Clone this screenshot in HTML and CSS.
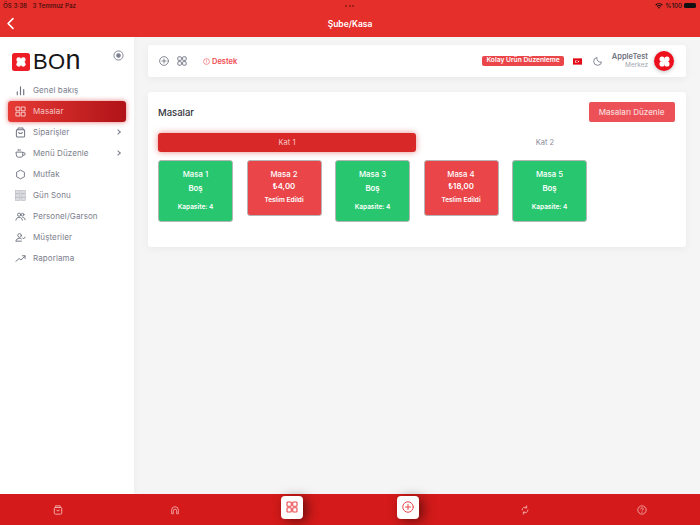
FILE: index.html
```html
<!DOCTYPE html>
<html lang="tr">
<head>
<meta charset="utf-8">
<title>Şube/Kasa</title>
<link rel="stylesheet" href="styles.css">
</head>
<body>
<svg class="defs" width="0" height="0" aria-hidden="true">
  <defs>
    <symbol id="clover" viewBox="0 0 24 24"><g fill="#fff"><circle cx="7.500" cy="7.500" r="4.800"/><circle cx="16.500" cy="7.500" r="4.800"/><circle cx="7.500" cy="16.500" r="4.800"/><circle cx="16.500" cy="16.500" r="4.800"/><path d="M8 8h8v8H8z"/></g></symbol>
    <symbol id="grid" viewBox="0 0 24 24"><g fill="none" stroke="currentColor" stroke-width="2.200"><rect x="2" y="2" width="8.500" height="8.500" rx="1.500"/><rect x="13.500" y="2" width="8.500" height="8.500" rx="1.500"/><rect x="2" y="13.500" width="8.500" height="8.500" rx="1.500"/><rect x="13.500" y="13.500" width="8.500" height="8.500" rx="1.500"/></g></symbol>
    <symbol id="plus" viewBox="0 0 24 24"><g fill="none" stroke="currentColor" stroke-width="2" stroke-linecap="round"><circle cx="12" cy="12" r="10.500"/><path d="M12 7v10M7 12h10"/></g></symbol>
    <symbol id="bag" viewBox="0 0 24 24"><g fill="none" stroke="currentColor" stroke-width="2.200" stroke-linecap="round" stroke-linejoin="round"><path d="M7 2h10l1 4h1a2 2 0 0 1 2 2v11a3 3 0 0 1-3 3H6a3 3 0 0 1-3-3V8a2 2 0 0 1 2-2h1z"/><path d="M6 6h12M8 12c1 3 7 3 8 0"/></g></symbol>
  </defs>
</svg>

<header class="topbar">
  <div class="status">
    <span class="status-left"><span>ÖS 3:38</span><span>3 Temmuz Paz</span></span>
    <span class="status-dots"><i></i><i></i><i></i></span>
    <span class="status-right">
      <svg class="wifi" viewBox="0 0 16 12"><path d="M8 11.500 5.800 9a3.200 3.200 0 0 1 4.400 0zM4.500 7.700 3 6.100a7.400 7.400 0 0 1 10 0l-1.500 1.600a5.200 5.200 0 0 0-7 0zM1.900 5 .4 3.400a11.200 11.200 0 0 1 15.200 0L14.100 5a9 9 0 0 0-12.200 0z" fill="#111"/></svg>
      <span>%100</span><span class="battery"></span>
    </span>
  </div>
  <div class="titlebar">
    <svg class="back" viewBox="0 0 10 16"><path d="M8 2 2 8l6 6" fill="none" stroke="#fff" stroke-width="2" stroke-linecap="round" stroke-linejoin="round"/></svg>
    <span class="title">Şube/Kasa</span>
  </div>
</header>

<div class="body-row">
  <aside class="sidebar">
    <div class="brand">
      <span class="logo-mark"><svg viewBox="0 0 24 24"><use href="#clover"/></svg></span>
      <span class="logo-text">BO<span class="logo-n">n</span></span>
      <svg class="pin" viewBox="0 0 12 12"><circle cx="6" cy="6" r="5" fill="none" stroke="#7c7f8e" stroke-width="1"/><circle cx="6" cy="6" r="2.500" fill="#7c7f8e"/></svg>
    </div>
    <nav class="menu">
      <a class="item"><svg viewBox="0 0 24 24"><path d="M5 21v-6M12 21V4M19 21v-11" fill="none" stroke="currentColor" stroke-width="2.500" stroke-linecap="round"/></svg><span>Genel bakış</span></a>
      <a class="item active"><svg viewBox="0 0 24 24"><use href="#grid"/></svg><span>Masalar</span></a>
      <a class="item"><svg viewBox="0 0 24 24"><use href="#bag"/></svg><span>Siparişler</span><b class="chev"></b></a>
      <a class="item"><svg viewBox="0 0 24 24"><path d="M3 9h14v7a4 4 0 0 1-4 4H7a4 4 0 0 1-4-4zM17 10h2a2.500 2.500 0 0 1 0 6h-2M7 3v3M11 3v3" fill="none" stroke="currentColor" stroke-width="2" stroke-linecap="round" stroke-linejoin="round"/></svg><span>Menü Düzenle</span><b class="chev"></b></a>
      <a class="item"><svg viewBox="0 0 24 24"><path d="M12 2.500 20.500 7v10L12 21.500 3.500 17V7z" fill="none" stroke="currentColor" stroke-width="2" stroke-linejoin="round"/></svg><span>Mutfak</span></a>
      <a class="item"><svg viewBox="0 0 24 24"><g fill="#dcdde2" stroke="#a6a8b4" stroke-width="1"><rect x="1" y="1" width="10" height="7"/><rect x="13" y="1" width="10" height="7"/><rect x="1" y="8.500" width="10" height="7"/><rect x="13" y="8.500" width="10" height="7"/><rect x="1" y="16" width="10" height="7"/><rect x="13" y="16" width="10" height="7"/></g></svg><span>Gün Sonu</span></a>
      <a class="item"><svg viewBox="0 0 24 24"><g fill="none" stroke="currentColor" stroke-width="2" stroke-linecap="round"><circle cx="9" cy="8" r="3.500"/><circle cx="16.500" cy="8" r="3"/><path d="M2 20c0-4 3-6 7-6s7 2 7 6M17 14c3 0 5 2 5 5"/></g></svg><span>Personel/Garson</span></a>
      <a class="item"><svg viewBox="0 0 24 24"><g fill="none" stroke="currentColor" stroke-width="2" stroke-linecap="round" stroke-linejoin="round"><circle cx="10" cy="7.500" r="4"/><path d="M2 20c0-4 3-6 8-6 2 0 3 .3 4 1M3 20h11M17 13l2 2 3-4"/></g></svg><span>Müşteriler</span></a>
      <a class="item"><svg viewBox="0 0 24 24"><path d="M2 18l7-6 4 3 9-8M16 6h6v6" fill="none" stroke="currentColor" stroke-width="2" stroke-linecap="round" stroke-linejoin="round"/></svg><span>Raporlama</span></a>
    </nav>
  </aside>

  <main class="content">
    <section class="card toolbar">
      <svg class="tool-icon" viewBox="0 0 24 24"><use href="#plus"/></svg>
      <svg class="tool-icon" viewBox="0 0 24 24"><use href="#grid"/></svg>
      <a class="support"><svg viewBox="0 0 12 12"><circle cx="6" cy="6" r="5" fill="none" stroke="currentColor"/><path d="M6 3.200v3.300M6 8v.8" stroke="currentColor"/></svg>Destek</a>
      <span class="spacer"></span>
      <span class="badge">Kolay Ürün Düzenleme</span>
      <svg class="flag" viewBox="0 0 10 7"><rect width="10" height="7" fill="#e30a17"/><circle cx="4" cy="3.500" r="1.700" fill="#fff"/><circle cx="4.500" cy="3.500" r="1.350" fill="#e30a17"/><circle cx="6.200" cy="3.500" r=".7" fill="#fff"/></svg>
      <svg class="moon" viewBox="0 0 24 24"><path d="M20.500 14.500A9 9 0 0 1 9.500 3.500 9.500 9.500 0 1 0 20.500 14.500z" fill="none" stroke="#6f7280" stroke-width="2" stroke-linejoin="round"/></svg>
      <div class="user"><strong>AppleTest</strong><small>Merkez</small></div>
      <span class="avatar"><svg viewBox="0 0 24 24"><use href="#clover"/></svg></span>
    </section>

    <section class="card panel">
      <div class="panel-head">
        <h1>Masalar</h1>
        <button class="edit-btn" type="button">Masaları Düzenle</button>
      </div>
      <div class="tabs">
        <button class="tab on" type="button">Kat 1</button>
        <button class="tab" type="button">Kat 2</button>
      </div>
      <div class="tables">
        <article class="table free"><h2>Masa 1</h2><p class="state">Boş</p><p class="cap">Kapasite: 4</p></article>
        <article class="table busy"><h2>Masa 2</h2><p class="state">₺4,00</p><p class="note">Teslim Edildi</p></article>
        <article class="table free"><h2>Masa 3</h2><p class="state">Boş</p><p class="cap">Kapasite: 4</p></article>
        <article class="table busy"><h2>Masa 4</h2><p class="state">₺18,00</p><p class="note">Teslim Edildi</p></article>
        <article class="table free"><h2>Masa 5</h2><p class="state">Boş</p><p class="cap">Kapasite: 4</p></article>
      </div>
    </section>
  </main>
</div>

<footer class="dock">
  <span class="dock-cell"><svg viewBox="0 0 24 24"><use href="#bag"/></svg></span>
  <span class="dock-cell"><svg viewBox="0 0 24 24"><path d="M4 21v-9a8 8 0 0 1 16 0v9h-4v-7a4 4 0 0 0-8 0v7z" fill="none" stroke="currentColor" stroke-width="2" stroke-linejoin="round"/></svg></span>
  <span class="dock-cell"><span class="dock-btn"><svg viewBox="0 0 24 24"><use href="#grid"/></svg></span></span>
  <span class="dock-cell"><span class="dock-btn"><svg viewBox="0 0 24 24"><use href="#plus"/></svg></span></span>
  <span class="dock-cell"><svg viewBox="0 0 24 24"><path d="M5 12a7 7 0 0 1 11-5.700M19 12a7 7 0 0 1-11 5.700M16 2v5h-4M8 22v-5h4" fill="none" stroke="currentColor" stroke-width="2" stroke-linecap="round" stroke-linejoin="round"/></svg></span>
  <span class="dock-cell"><svg viewBox="0 0 24 24"><circle cx="12" cy="12" r="10" fill="none" stroke="currentColor" stroke-width="2"/><path d="M9 9.500a3 3 0 1 1 4.500 2.600c-1 .6-1.500 1.200-1.500 2.400M12 17.500v.5" fill="none" stroke="currentColor" stroke-width="2" stroke-linecap="round"/></svg></span>
</footer>
</body>
</html>
```

FILE: styles.css
```css
* { box-sizing: border-box; }
html, body { margin: 0; height: 100%; }
body {
  width: 700px;
  height: 525px;
  display: flex;
  flex-direction: column;
  overflow: hidden;
  background: #f5f5f5;
  font-family: Inter, "Noto Sans", sans-serif;
  color: #6f7280;
}
.defs { position: absolute; }

.topbar { height: 36.500px; background: #e52f2a; flex: none; }
.status {
  height: 11px;
  display: flex;
  justify-content: space-between;
  align-items: center;
  padding: 0 4px 0 3px;
  position: relative;
  font-size: 6.200px;
  font-weight: 500;
  color: #3a0d0b;
}
.status-left { display: flex; gap: 5.500px; }
.status-dots { display: flex; gap: 1.500px; position: absolute; left: 345px; top: 5px; }
.status-dots i { width: 2px; height: 2px; border-radius: 50%; background: #8a1a16; }
.status-right { display: flex; align-items: center; gap: 2px; color: #111; }
.wifi { width: 8px; height: 6px; }
.battery { width: 12px; height: 5.500px; border-radius: 1.500px; background: #111; }
.titlebar { height: 25.500px; display: flex; align-items: center; justify-content: center; position: relative; }
.back { position: absolute; left: 6px; top: 6px; width: 9px; height: 13px; }
.title { color: #fff; font-size: 8.500px; font-weight: 600; }

.body-row { flex: 1; display: flex; min-height: 0; }
.sidebar { width: 134px; flex: none; background: #fff; padding: 15px 8px 0; box-shadow: 0 0 8px rgba(0,0,0,.05); }
.brand { display: flex; align-items: center; height: 20px; padding-left: 4px; position: relative; }
.logo-mark { width: 18px; height: 18px; border-radius: 2.500px; background: #ee1c25; display: flex; align-items: center; justify-content: center; flex: none; }
.logo-mark svg { width: 12px; height: 12px; }
.logo-text { margin-left: 3px; font-family: "Liberation Sans", sans-serif; font-size: 22px; line-height: 20px; letter-spacing: .3px; color: #161616; font-weight: 400; }
.logo-n { font-size: 27px; line-height: 18px; }
.pin { position: absolute; left: 105px; top: -2px; width: 11px; height: 11px; }

.menu { display: flex; flex-direction: column; margin-top: 8px; }
.item { height: 21px; display: flex; align-items: center; gap: 7px; padding: 0 4px 0 7px; font-size: 8px; letter-spacing: .1px; color: #7b7e8c; }
.item svg { width: 11px; height: 11px; flex: none; color: #6f7280; }
.item span { flex: 1; }
.item.active { background: linear-gradient(90deg, #e63a35, #b01317); border-radius: 3px; box-shadow: 0 0 5px rgba(214,40,40,.65); color: #f4c5c5; }
.item.active svg { color: #f4c5c5; }
.chev { width: 4px; height: 4px; border-top: 1px solid #7b7e8c; border-right: 1px solid #7b7e8c; transform: rotate(45deg); margin-right: 2px; }

.content { flex: 1; padding: 8.500px 14px 0; display: flex; flex-direction: column; gap: 15px; min-width: 0; }
.card { background: #fff; border-radius: 3px; box-shadow: 0 2px 8px rgba(0,0,0,.05); }
.toolbar { height: 32px; display: flex; align-items: center; padding: 0 12px 0 11px; }
.tool-icon { width: 10px; height: 10px; color: #6f7280; margin-right: 8px; }
.support { display: flex; align-items: center; gap: 2px; margin-left: 8px; font-size: 7.500px; font-weight: 600; color: #ee4a50; }
.support svg { width: 7px; height: 7px; }
.spacer { flex: 1; }
.badge { background: #ea4549; color: #fff; font-size: 6.700px; font-weight: 600; padding: 1.500px 4px; border-radius: 2px; line-height: 7.500px; }
.flag { width: 9px; height: 7px; margin-left: 9px; }
.moon { width: 10px; height: 10px; margin-left: 11px; }
.user { margin-left: 9px; display: flex; flex-direction: column; align-items: flex-end; line-height: 9.500px; }
.user strong { font-size: 7.500px; font-weight: 600; color: #6f7280; }
.user small { font-size: 6.500px; color: #a3a5b0; }
.avatar { width: 20px; height: 20px; margin-left: 6px; border-radius: 50%; background: #ee0f1c; display: flex; align-items: center; justify-content: center; box-shadow: 0 1px 4px rgba(0,0,0,.25); }
.avatar svg { width: 13px; height: 13px; }

.panel { height: 155px; padding: 10px 11.500px 10px 10px; }
.panel-head { display: flex; justify-content: space-between; align-items: center; height: 20px; }
h1 { margin: 0; font-size: 9.500px; font-weight: 500; color: #33343c; }
.edit-btn { width: 86px; height: 20px; padding: 0; border: 0; border-radius: 2px; background: #ec5158; color: #fbd9da; font: 500 8px Inter, sans-serif; }
.tabs { display: grid; grid-template-columns: 258px 258px; margin-top: 11px; }
.tab { height: 19px; padding: 0; border: 0; background: none; border-radius: 3px; font: 400 7.500px Inter, sans-serif; color: #8a8c98; }
.tab.on { background: #d92828; color: #f6c8c8; box-shadow: 0 0 6px rgba(214,40,40,.55); }
.tables { display: flex; align-items: flex-start; gap: 13.500px; margin-top: 8px; }
.table { width: 75px; flex: none; border-radius: 3px; border: 1px solid #b5b5b5; color: #fff; text-align: center; padding-top: 6.500px; }
.table h2 { margin: 0; font-size: 7.800px; font-weight: 500; line-height: 12px; }
.table p { margin: 0; }
.state { font-size: 7.800px; font-weight: 600; line-height: 12px; }
.table.free { height: 62px; background: #28c76f; }
.table.free .state { margin-top: 2px; }
.table.busy { height: 56px; background: #ea4549; }
.cap { font-size: 6.500px; font-weight: 600; line-height: 9px; }
.table .cap { margin-top: 9px; }
.table .note { margin-top: 4.500px; }
.note { font-size: 6.500px; font-weight: 600; line-height: 9px; }

.dock { height: 31px; flex: none; background: #d41a1a; display: grid; grid-template-columns: repeat(6, 1fr); align-items: center; }
.dock-cell { display: flex; justify-content: center; align-items: center; color: #f5b5b5; position: relative; height: 31px; }
.dock-cell > svg { width: 10px; height: 10px; margin-top: 1px; }
.dock-btn { width: 22px; height: 23px; margin-top: -5px; background: #fff; border-radius: 4px; display: flex; align-items: center; justify-content: center; color: #e9474c; box-shadow: 4px 2px 12px rgba(0,0,0,.5); }
.dock-btn svg { width: 12px; height: 12px; }
```
